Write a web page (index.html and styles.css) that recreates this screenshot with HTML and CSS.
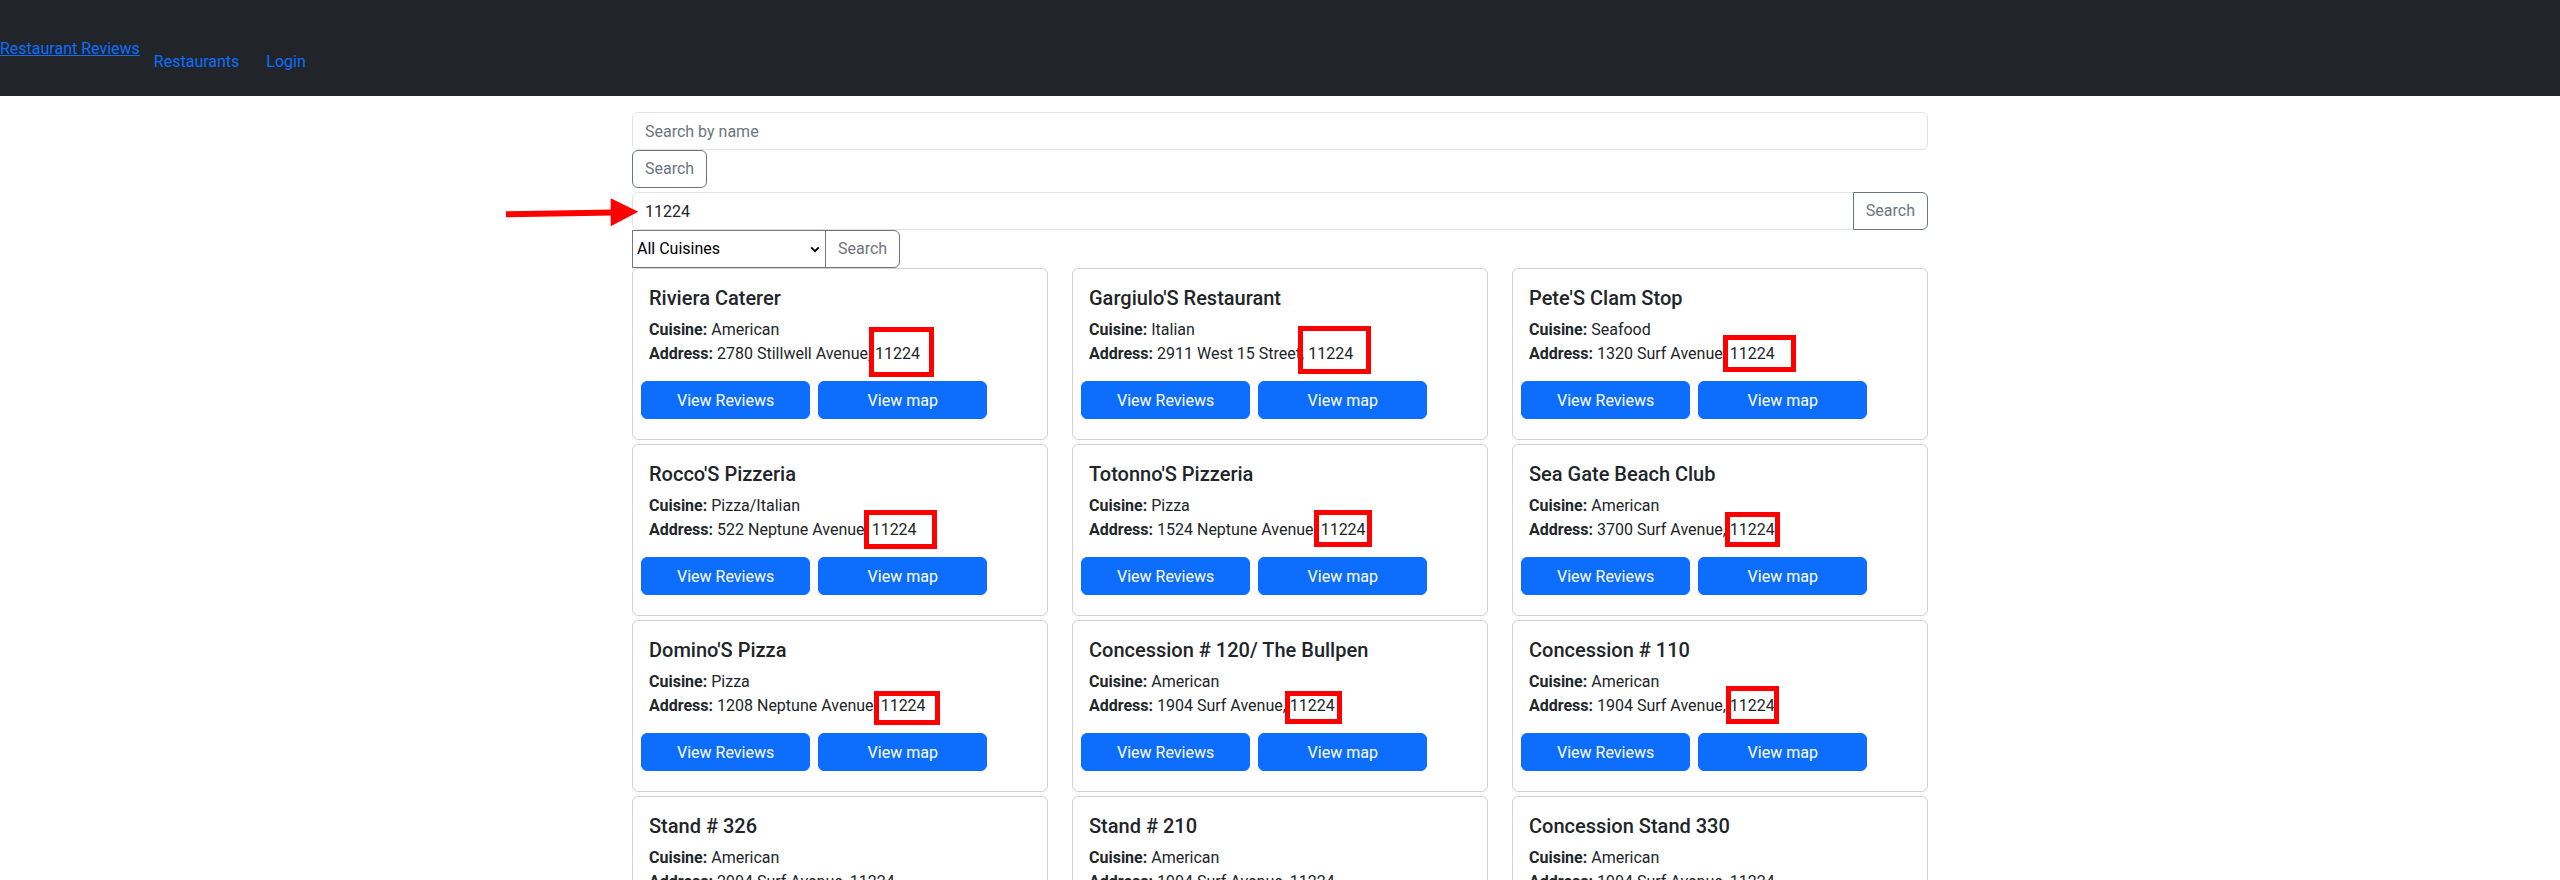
FILE: index.html
```html
<!DOCTYPE html>
<html lang="en">
<head>
<meta charset="utf-8">
<title>Restaurant Reviews</title>
<link rel="stylesheet" href="styles.css">
</head>
<body>
<nav class="topbar">
  <a class="brand" href="#">Restaurant Reviews</a>
  <ul class="nav-links">
    <li><a href="#">Restaurants</a></li>
    <li><a href="#">Login</a></li>
  </ul>
</nav>
<main class="container">
  <div class="search-block">
    <input class="field" type="text" placeholder="Search by name">
    <button class="btn-outline" type="button">Search</button>
  </div>
  <div class="group zip-group">
    <svg class="arrow" viewBox="0 0 134 38" width="134" height="38" aria-hidden="true">
      <line x1="0" y1="22.3" x2="107" y2="20.4" stroke="#ff0000" stroke-width="6"/>
      <polygon points="104.7,6.3 104.7,34.3 132.3,19.7" fill="#ff0000"/>
    </svg>
    <input class="field" type="text" value="11224">
    <button class="btn-outline" type="button">Search</button>
  </div>
  <div class="group cuisine-group">
    <div class="select-wrap">
      <select class="cuisine-select">
        <option>All Cuisines</option>
      </select>
      <svg class="chevron" viewBox="0 0 10 7" width="10" height="7" aria-hidden="true">
        <path d="M1.2 1.3 L5 5.2 L8.8 1.3" fill="none" stroke="#000" stroke-width="1.9"/>
      </svg>
    </div>
    <button class="btn-outline" type="button">Search</button>
  </div>

  <div class="cards">
    <div class="card">
      <h5 class="card-title">Riviera Caterer</h5>
      <p class="card-text"><strong>Cuisine:</strong> American<br><strong>Address:</strong> 2780 Stillwell Avenue, <span class="zip mk-1">11224</span></p>
      <div class="actions"><a class="btn-primary" href="#">View Reviews</a><a class="btn-primary" href="#">View map</a></div>
    </div>
    <div class="card">
      <h5 class="card-title">Gargiulo'S Restaurant</h5>
      <p class="card-text"><strong>Cuisine:</strong> Italian<br><strong>Address:</strong> 2911 West 15 Street, <span class="zip mk-2">11224</span></p>
      <div class="actions"><a class="btn-primary" href="#">View Reviews</a><a class="btn-primary" href="#">View map</a></div>
    </div>
    <div class="card">
      <h5 class="card-title">Pete'S Clam Stop</h5>
      <p class="card-text"><strong>Cuisine:</strong> Seafood<br><strong>Address:</strong> 1320 Surf Avenue, <span class="zip mk-3">11224</span></p>
      <div class="actions"><a class="btn-primary" href="#">View Reviews</a><a class="btn-primary" href="#">View map</a></div>
    </div>

    <div class="card">
      <h5 class="card-title">Rocco'S Pizzeria</h5>
      <p class="card-text"><strong>Cuisine:</strong> Pizza/Italian<br><strong>Address:</strong> 522 Neptune Avenue, <span class="zip mk-4">11224</span></p>
      <div class="actions"><a class="btn-primary" href="#">View Reviews</a><a class="btn-primary" href="#">View map</a></div>
    </div>
    <div class="card">
      <h5 class="card-title">Totonno'S Pizzeria</h5>
      <p class="card-text"><strong>Cuisine:</strong> Pizza<br><strong>Address:</strong> 1524 Neptune Avenue, <span class="zip mk-5">11224</span></p>
      <div class="actions"><a class="btn-primary" href="#">View Reviews</a><a class="btn-primary" href="#">View map</a></div>
    </div>
    <div class="card">
      <h5 class="card-title">Sea Gate Beach Club</h5>
      <p class="card-text"><strong>Cuisine:</strong> American<br><strong>Address:</strong> 3700 Surf Avenue, <span class="zip mk-6">11224</span></p>
      <div class="actions"><a class="btn-primary" href="#">View Reviews</a><a class="btn-primary" href="#">View map</a></div>
    </div>

    <div class="card">
      <h5 class="card-title">Domino'S Pizza</h5>
      <p class="card-text"><strong>Cuisine:</strong> Pizza<br><strong>Address:</strong> 1208 Neptune Avenue, <span class="zip mk-7">11224</span></p>
      <div class="actions"><a class="btn-primary" href="#">View Reviews</a><a class="btn-primary" href="#">View map</a></div>
    </div>
    <div class="card">
      <h5 class="card-title">Concession # 120/ The Bullpen</h5>
      <p class="card-text"><strong>Cuisine:</strong> American<br><strong>Address:</strong> 1904 Surf Avenue, <span class="zip mk-8">11224</span></p>
      <div class="actions"><a class="btn-primary" href="#">View Reviews</a><a class="btn-primary" href="#">View map</a></div>
    </div>
    <div class="card">
      <h5 class="card-title">Concession # 110</h5>
      <p class="card-text"><strong>Cuisine:</strong> American<br><strong>Address:</strong> 1904 Surf Avenue, <span class="zip mk-9">11224</span></p>
      <div class="actions"><a class="btn-primary" href="#">View Reviews</a><a class="btn-primary" href="#">View map</a></div>
    </div>

    <div class="card">
      <h5 class="card-title">Stand # 326</h5>
      <p class="card-text"><strong>Cuisine:</strong> American<br><strong>Address:</strong> 2904 Surf Avenue, <span class="zip">11224</span></p>
      <div class="actions"><a class="btn-primary" href="#">View Reviews</a><a class="btn-primary" href="#">View map</a></div>
    </div>
    <div class="card">
      <h5 class="card-title">Stand # 210</h5>
      <p class="card-text"><strong>Cuisine:</strong> American<br><strong>Address:</strong> 1904 Surf Avenue, <span class="zip">11224</span></p>
      <div class="actions"><a class="btn-primary" href="#">View Reviews</a><a class="btn-primary" href="#">View map</a></div>
    </div>
    <div class="card">
      <h5 class="card-title">Concession Stand 330</h5>
      <p class="card-text"><strong>Cuisine:</strong> American<br><strong>Address:</strong> 1904 Surf Avenue, <span class="zip">11224</span></p>
      <div class="actions"><a class="btn-primary" href="#">View Reviews</a><a class="btn-primary" href="#">View map</a></div>
    </div>
  </div>
</main>
</body>
</html>
```

FILE: styles.css
```css
html {
  overflow: hidden;
}

body {
  margin: 0;
  font-family: Roboto, "Liberation Sans", Arial, sans-serif;
  font-size: 16px;
  line-height: 1.5;
  color: #212529;
  background: #fff;
}

/* ---------- top bar ---------- */
.topbar {
  box-sizing: border-box;
  height: 96px;
  padding-top: 2px;
  background: #212529;
  display: flex;
  align-items: center;
}

.brand {
  color: #0d6efd;
  text-decoration: underline;
  margin-right: 14px;
}

.nav-links {
  list-style: none;
  margin: 26px 0 0;
  padding: 0;
  display: flex;
  gap: 27px;
}

.nav-links a {
  color: #0d6efd;
  text-decoration: none;
}

/* ---------- container ---------- */
.container {
  max-width: 1320px;
  box-sizing: border-box;
  padding: 0 12px;
  margin: 16px auto 0;
}

/* ---------- form controls ---------- */
.field {
  display: block;
  width: 100%;
  box-sizing: border-box;
  height: 38px;
  padding: 6px 12px;
  font: inherit;
  line-height: 24px;
  color: #212529;
  background: #fff;
  border: 1px solid #dee2e6;
  border-radius: 6px;
  outline: none;
}

.field::placeholder {
  color: #6c757d;
}

.btn-outline {
  box-sizing: border-box;
  height: 38px;
  padding: 6px 12px;
  font: inherit;
  line-height: 24px;
  color: #6c757d;
  background: #fff;
  border: 1px solid #6c757d;
  border-radius: 6px;
  cursor: pointer;
}

.search-block {
  display: flex;
  flex-direction: column;
  align-items: flex-start;
}

.group {
  display: flex;
  position: relative;
}

.zip-group {
  margin-top: 4px;
}

.zip-group .field {
  flex: 1;
  border-radius: 6px 0 0 6px;
}

.zip-group .btn-outline {
  margin-left: -1px;
  border-radius: 0 6px 6px 0;
}

.arrow {
  position: absolute;
  left: -126px;
  top: 0;
  overflow: visible;
  pointer-events: none;
  z-index: 2;
}

.select-wrap {
  position: relative;
  width: 194px;
}

.cuisine-select {
  appearance: none;
  -webkit-appearance: none;
  display: block;
  width: 100%;
  height: 38px;
  box-sizing: border-box;
  margin: 0;
  padding: 0 20px 0 4px;
  font: inherit;
  color: #000;
  background: #fff;
  border: 1px solid #767676;
  border-radius: 0;
}

.chevron {
  position: absolute;
  right: 6px;
  top: 16px;
  pointer-events: none;
}

.cuisine-group .btn-outline {
  margin-left: -1px;
  border-radius: 0 6px 6px 0;
}

/* ---------- cards ---------- */
.cards {
  display: grid;
  grid-template-columns: repeat(3, 1fr);
  column-gap: 24px;
  row-gap: 4px;
}

.card {
  border: 1px solid rgba(0, 0, 0, 0.175);
  border-radius: 6px;
  padding: 16px;
  min-width: 0;
}

.card-title {
  margin: 0 0 6px;
  font-size: 20px;
  font-weight: 500;
  line-height: 26px;
}

.card-text {
  margin: 0 0 15px;
  padding-top: 1px;
}

.card-text strong {
  font-weight: 700;
}

.actions {
  display: flex;
  margin: 0 -12px 4px;
}

.btn-primary {
  box-sizing: border-box;
  width: calc(100% * 5 / 12);
  height: 38px;
  margin: 0 4px;
  padding: 7px 12px 5px;
  line-height: 24px;
  text-align: center;
  text-decoration: none;
  color: #fff;
  background: #0d6efd;
  border: 1px solid #0d6efd;
  border-radius: 6px;
}

/* ---------- annotation boxes ---------- */
.zip {
  display: inline-block;
  position: relative;
  line-height: 24px;
}

.zip::after {
  position: absolute;
  box-sizing: border-box;
  border: 5px solid #ff0000;
  left: var(--x);
  top: var(--y);
  width: var(--w);
  height: var(--h);
}

.mk-1::after, .mk-2::after, .mk-3::after,
.mk-4::after, .mk-5::after, .mk-6::after,
.mk-7::after, .mk-8::after, .mk-9::after {
  content: "";
}

.mk-1 { --x: -6px;  --y: -15px; --w: 65px; --h: 50px; }
.mk-2 { --x: -10px; --y: -16px; --w: 73px; --h: 48px; }
.mk-3 { --x: -7px;  --y: -7px;  --w: 73px; --h: 37px; }
.mk-4 { --x: -8px;  --y: -8px;  --w: 73px; --h: 39px; }
.mk-5 { --x: -7px;  --y: -8px;  --w: 58px; --h: 37px; }
.mk-6 { --x: -5px;  --y: -6px;  --w: 55px; --h: 35px; }
.mk-7 { --x: -7px;  --y: -3px;  --w: 66px; --h: 34px; }
.mk-8 { --x: -5px;  --y: -3px;  --w: 57px; --h: 33px; }
.mk-9 { --x: -4px;  --y: -8px;  --w: 53px; --h: 38px; }
```
